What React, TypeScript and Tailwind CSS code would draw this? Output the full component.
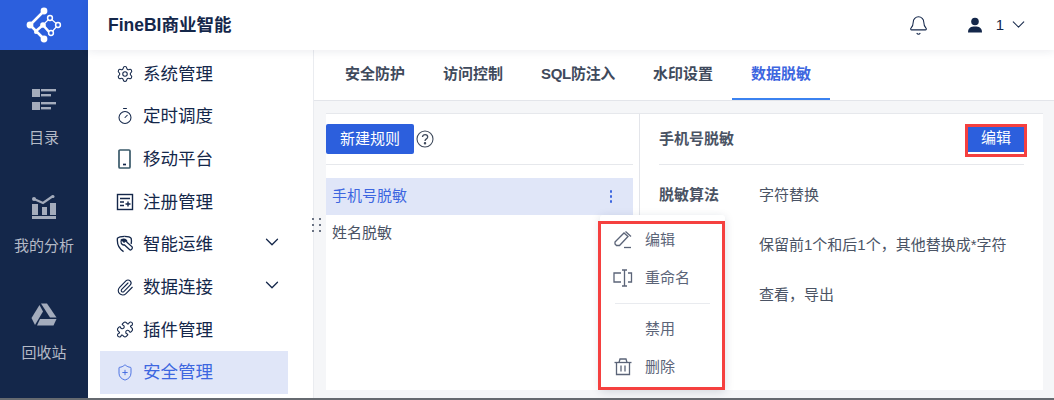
import { Bell, ChevronDown, Paperclip, Puzzle, Settings, ShieldPlus, Timer } from "lucide-react";
import type { ReactNode } from "react";

const font = "font-['Liberation_Sans','Noto_Sans_CJK_SC',sans-serif]";

function Logo() {
  return (
    <svg width="36" height="36" viewBox="0 0 36 36" fill="none">
      <g stroke="#fff" strokeWidth="2.600">
        <path d="M18 4 4 18l14 14" />
        <path d="M10 24l7-6 7 8" />
      </g>
      <path d="M17 18l7-7 8 7-7 8" stroke="#fff" strokeWidth="1.200" />
      <g fill="#fff">
        <circle cx="18" cy="4" r="3.400" />
        <circle cx="4" cy="18" r="3.400" />
        <circle cx="18" cy="32" r="3.400" />
        <circle cx="17" cy="18" r="2.800" />
        <circle cx="10" cy="25" r="2" />
      </g>
      <g fill="#2c5fdd" stroke="#fff" strokeWidth="1.500">
        <circle cx="24" cy="11" r="2.400" />
        <circle cx="32" cy="18" r="2.400" />
        <circle cx="25" cy="26" r="2.400" />
      </g>
    </svg>
  );
}

function CatalogIcon() {
  return (
    <svg width="24" height="22" viewBox="0 0 24 22" fill="#a4acbc">
      <rect x="0" y="0" width="8" height="8" />
      <rect x="9" y="0" width="15" height="2.400" />
      <rect x="9" y="5" width="10" height="2.400" />
      <rect x="0" y="13" width="8" height="8" />
      <rect x="9" y="13" width="15" height="2.400" />
      <rect x="9" y="18" width="10" height="2.400" />
    </svg>
  );
}

function AnalysisIcon() {
  return (
    <svg width="24" height="24" viewBox="0 0 24 24" fill="#a4acbc">
      <rect x="0" y="9" width="6" height="11" />
      <rect x="10" y="12" width="5" height="8" />
      <rect x="18" y="8" width="6" height="12" />
      <rect x="0" y="21" width="24" height="3" />
      <path d="M2 4l9 4 10-7" fill="none" stroke="#a4acbc" strokeWidth="2.200" />
      <circle cx="2" cy="4" r="2" />
      <circle cx="21" cy="1.500" r="1.500" />
    </svg>
  );
}

function TrashDriveIcon() {
  return (
    <svg width="26" height="23" viewBox="0 0 26 23" fill="#a4acbc">
      <path d="M10 .5h6l9.500 14h-6.500z" />
      <path d="M8.500 2 .5 15l3.500 7 8-13.500z" />
      <path d="M9 16h16.500l-3 6.500H6z" />
    </svg>
  );
}

function PhoneIcon() {
  return (
    <svg width="18" height="20" viewBox="0 0 18 20" fill="none" stroke="#3a5a6a" strokeWidth="1.700">
      <rect x="3" y="1" width="11" height="18" rx="1" />
      <path d="M7 15.500h3" stroke="#14274a" />
    </svg>
  );
}

function RegisterIcon() {
  return (
    <svg width="18" height="18" viewBox="0 0 18 18" fill="none" stroke="#14274a" strokeWidth="1.400">
      <rect x="1.500" y="1.500" width="15" height="15" />
      <path d="M4 5.500h10M4 9h4M4 12.500h4M9.500 11h5M12 8.500v5" />
    </svg>
  );
}

function OpsIcon() {
  return (
    <svg width="19" height="19" viewBox="0 0 19 19" fill="none" stroke="#14274a" strokeWidth="1.400">
      <path d="M9 1C6 1 3 1.500 1.500 3c-.5 5 .5 10 6.500 14" />
      <path d="M9 1c3 0 6 .5 7 2 .5 2 .5 4 0 6" />
      <path d="M6 4.500c2-1.500 5.500-.5 5.500 2.500l5.500 5c1 1.500-1 4-2.500 3l-5.500-5c-3 .5-5-3-3-5.500l2.500 2.500 2-1.500z" />
    </svg>
  );
}

function PencilIcon() {
  return (
    <svg width="18" height="18" viewBox="0 0 18 18" fill="none" stroke="#5b6478" strokeWidth="1.300">
      <path d="M1 11 10 2l4 3.500L5.500 14.500H2.500L1 13z" />
      <path d="M11.500 .5 17 5.500" />
      <path d="M10 16.500h7" />
    </svg>
  );
}

function RenameIcon() {
  return (
    <svg width="20" height="18" viewBox="0 0 20 18" fill="none" stroke="#5b6478" strokeWidth="1.300">
      <path d="M8 4H1v9h7" />
      <path d="M15 4h3.500v9H15" />
      <path d="M9 1h5M11.500 1v16M9 17h5" />
    </svg>
  );
}

function BinIcon() {
  return (
    <svg width="18" height="18" viewBox="0 0 18 18" fill="none" stroke="#5b6478" strokeWidth="1.300">
      <path d="M.5 4.500h17" />
      <path d="M5 4.500 6 1h6l1 3.500" />
      <path d="M2.500 4.500V16.500h13V4.500" />
      <path d="M7 7.500v6M11 7.500v6" />
    </svg>
  );
}

function UserIcon() {
  return (
    <svg width="16" height="16" viewBox="0 0 16 16" fill="#14274a">
      <circle cx="8" cy="4.500" r="3.800" />
      <path d="M1 15.500c0-5 3-6 7-6s7 1 7 6z" />
    </svg>
  );
}

function RailItem({ icon, label }: { icon: ReactNode; label: string }) {
  return (
    <div className="h-[107px] flex flex-col items-center justify-center gap-[17px]">
      {icon}
      <span className="text-[15px] leading-5 text-[#b4bac6]">{label}</span>
    </div>
  );
}

function MenuItem({ icon, label, arrow, active }: { icon: ReactNode; label: string; arrow?: boolean; active?: boolean }) {
  return (
    <div className={`h-[42.700px] w-[188px] flex items-center pl-[16px] ${active ? "bg-[#e0e6f8] text-[#3d66e0]" : "text-[#14274a]"}`}>
      <span className="w-[18px] h-[18px] flex items-center justify-center">{icon}</span>
      <span className="ml-[9px] text-[17.500px] leading-6">{label}</span>
      {arrow && <ChevronDown className="ml-auto mr-[5px] mt-[-4px]" size={22} strokeWidth={1.400} color="#14274a" />}
    </div>
  );
}

function Tab({ label, active, tight }: { label: string; active?: boolean; tight?: boolean }) {
  return (
    <div className={`h-[49px] px-[19px] flex items-center text-[15px] font-bold border-b-2 ${tight ? "tracking-[-0.3px]" : ""} ${active ? "text-[#3d66e0] border-[#3b82f0]" : "text-[#3f4a5c] border-transparent"}`}>
      {label}
    </div>
  );
}

function PopupRow({ icon, label }: { icon?: ReactNode; label: string }) {
  return (
    <div className="h-[38px] flex items-center text-[15px] text-[#5b6478]">
      <span className="w-[20px] flex justify-center ml-[13px]">{icon}</span>
      <span className="ml-[12px]">{label}</span>
    </div>
  );
}

function DetailRow({ label, value }: { label?: string; value: string }) {
  return (
    <div className="h-[50px] flex items-center text-[15px] text-[#4a5364]">
      <span className="w-[100px] font-bold">{label}</span>
      <span>{value}</span>
    </div>
  );
}

export default function App() {
  return (
    <div className={`${font} relative w-[1054px] h-[400px] overflow-hidden flex border-b-2 border-[#666a70] bg-white`}>
      {/* left rail */}
      <div className="w-[88px] shrink-0 bg-[#14274a] flex flex-col">
        <div className="h-[50px] bg-[#2c5fdd] flex items-center justify-center">
          <Logo />
        </div>
        <div className="pt-[15px] flex flex-col">
          <RailItem icon={<CatalogIcon />} label="目录" />
          <RailItem icon={<AnalysisIcon />} label="我的分析" />
          <RailItem icon={<TrashDriveIcon />} label="回收站" />
        </div>
      </div>

      <div className="flex-1 min-w-0 flex flex-col">
        {/* header */}
        <div className="h-[50px] shrink-0 flex items-center pl-[20px] relative z-10 bg-white shadow-[0_2px_8px_rgba(20,39,74,0.08)]">
          <span className="text-[17.500px] font-bold text-[#14274a]">FineBI商业智能</span>
          <div className="ml-auto flex items-center text-[#14274a]">
            <Bell size={21} strokeWidth={1.200} />
            <span className="ml-[38px]"><UserIcon /></span>
            <span className="ml-[13px] text-[15px]">1</span>
            <ChevronDown className="ml-[4px] mt-[-2px]" size={21} strokeWidth={1.200} />
            <span className="w-[25px]" />
          </div>
        </div>

        <div className="flex-1 min-h-0 flex">
          {/* side menu */}
          <div className="w-[225px] shrink-0 pl-[12px] pt-[2.300px] flex flex-col">
            <MenuItem icon={<Settings size={20} strokeWidth={1.400} />} label="系统管理" />
            <MenuItem icon={<Timer size={20} strokeWidth={1.400} />} label="定时调度" />
            <MenuItem icon={<PhoneIcon />} label="移动平台" />
            <MenuItem icon={<RegisterIcon />} label="注册管理" />
            <MenuItem icon={<OpsIcon />} label="智能运维" arrow />
            <MenuItem icon={<Paperclip size={19} strokeWidth={1.500} />} label="数据连接" arrow />
            <MenuItem icon={<Puzzle size={19} strokeWidth={1.500} />} label="插件管理" />
            <MenuItem icon={<ShieldPlus size={21} strokeWidth={1.200} />} label="安全管理" active />
          </div>

          {/* main */}
          <div className="flex-1 min-w-0 flex flex-col bg-[#f5f6f8] border-l border-[#eaecf0]">
            <div className="h-[51px] shrink-0 bg-white border-b border-[#e3e5ea] flex items-end pl-[12px]">
              <Tab label="安全防护" />
              <Tab label="访问控制" />
              <Tab label="SQL防注入" tight />
              <Tab label="水印设置" />
              <Tab label="数据脱敏" active />
            </div>
            <div className="flex-1 min-h-0 pt-[12px] pl-[12px] pr-[11px] pb-[8px]">
              <div className="h-full bg-white border-t border-[#e6e8ec] flex">
                {/* rule list */}
                <div className="w-[314px] shrink-0 border-r border-[#e3e5ea] pr-[6px]">
                  <div className="h-[51px] border-b border-[#e6e8ec] flex items-start pt-[10px]">
                    <button className="w-[88px] h-[30px] rounded-[2px] bg-[#2c5fdd] text-white text-[15px]">新建规则</button>
                    <svg className="ml-[2px] mt-[6px]" width="18" height="18" viewBox="0 0 18 18" fill="none" stroke="#3f4a5c" strokeWidth="1.100">
                      <circle cx="9" cy="9" r="8" />
                      <path d="M6.500 7c0-3.300 5.200-3.300 5.200 0 0 2-2.700 1.800-2.700 4" strokeWidth="1.300" />
                      <circle cx="9" cy="13.200" r=".7" fill="#3f4a5c" />
                    </svg>
                  </div>
                  <div className="mt-[13px] h-[37px] bg-[#e0e6f8] flex items-center pl-[6px] pr-[21px] text-[15px] text-[#3d66e0]">
                    手机号脱敏
                    <span className="ml-auto flex flex-col gap-[2.500px]">
                      <span className="w-[2.500px] h-[2.500px] rounded-full bg-[#3d66e0]" />
                      <span className="w-[2.500px] h-[2.500px] rounded-full bg-[#3d66e0]" />
                      <span className="w-[2.500px] h-[2.500px] rounded-full bg-[#3d66e0]" />
                    </span>
                  </div>
                  <div className="h-[37px] flex items-center pl-[6px] text-[15px] text-[#4a5364]">姓名脱敏</div>
                </div>

                {/* rule detail */}
                <div className="flex-1 min-w-0 pl-[19px] pr-[19px]">
                  <div className="h-[51px] border-b border-[#e6e8ec] flex items-center justify-between">
                    <span className="text-[15px] font-bold text-[#4a5364]">手机号脱敏</span>
                    <button className="w-[56px] h-[27px] mb-[2px] bg-[#2c5fdd] text-white text-[15px]">编辑</button>
                  </div>
                  <div className="pt-[5px]">
                    <DetailRow label="脱敏算法" value="字符替换" />
                    <DetailRow value="保留前1个和后1个，其他替换成*字符" />
                    <DetailRow value="查看，导出" />
                  </div>
                </div>
              </div>
            </div>
          </div>
        </div>
      </div>

      {/* resize grip */}
      <div className="absolute left-[312px] top-[218px] grid grid-cols-2 gap-x-[5px] gap-y-[4px]">
        {[0, 1, 2, 3, 4, 5].map((i) => (
          <span key={i} className="w-[2px] h-[2px] bg-[#6b7484]" />
        ))}
      </div>

      {/* context menu */}
      <div className="absolute left-[600px] top-[215px] w-[125px] h-[175px] bg-white rounded-[3px] shadow-[0_2px_10px_rgba(20,39,74,0.15)] pt-[6px]">
        <PopupRow icon={<PencilIcon />} label="编辑" />
        <PopupRow icon={<RenameIcon />} label="重命名" />
        <div className="mx-[15px] my-[6px] h-px bg-[#e9ebef]" />
        <PopupRow label="禁用" />
        <PopupRow icon={<BinIcon />} label="删除" />
      </div>

      {/* red annotations from the screenshot */}
      <div className="absolute left-[598px] top-[221px] w-[127px] h-[169px] border-[3px] border-[#f5403f]" />
      <div className="absolute left-[965px] top-[124px] w-[62px] h-[33px] border-[3px] border-[#f5403f]" />
    </div>
  );
}
